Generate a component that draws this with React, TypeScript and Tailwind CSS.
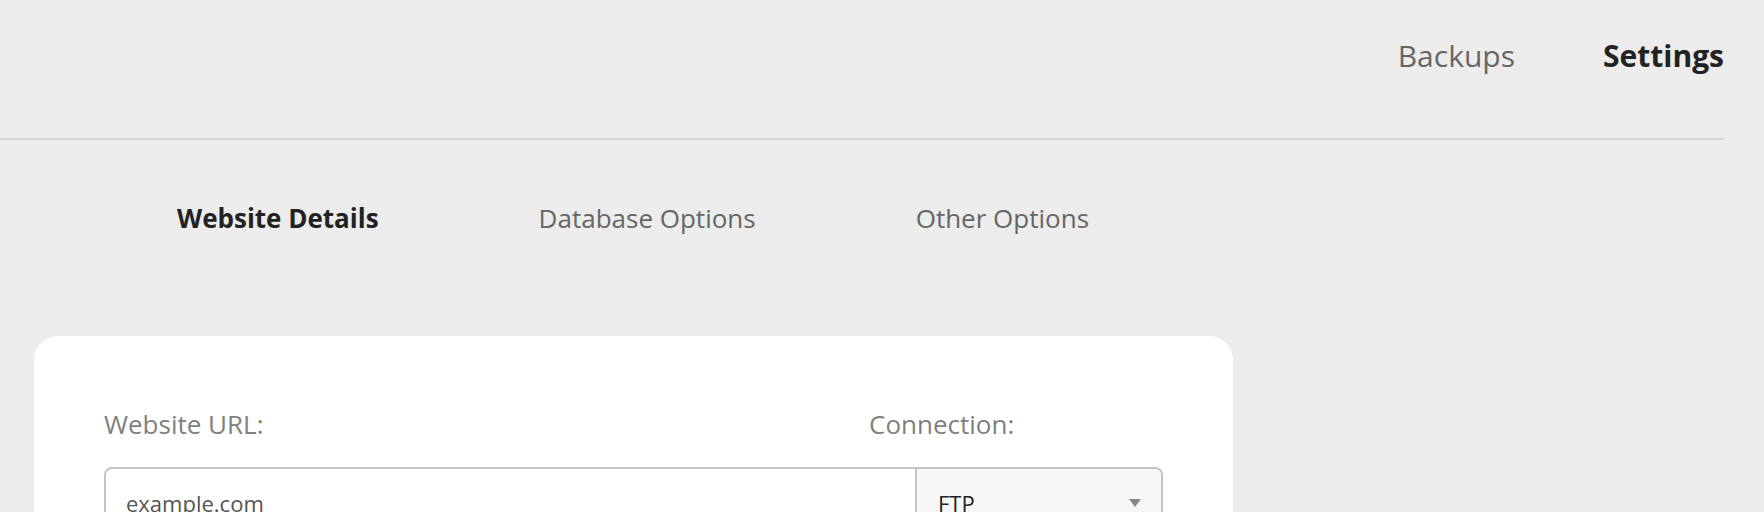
import { useState } from 'react';

const tabs = ['Website Details', 'Database Options', 'Other Options'];

export default function App() {
  const [tab, setTab] = useState('Website Details');
  const [url, setUrl] = useState('');

  return (
    <div className="min-h-screen bg-[#ececec] font-['Open_Sans',sans-serif] overflow-hidden">
      <div className="mr-[40px] h-[140px] border-b-2 border-[#d6d6d6] flex justify-end items-start pt-[38px] gap-[88px] text-[30px] leading-[36px]">
        <a className="text-[#666666]">Backups</a>
        <a className="text-[#222222] font-bold">Settings</a>
      </div>

      <div className="flex pl-[177px] gap-[160px] mt-[61px] text-[26px] leading-[34px]">
        {tabs.map(t => (
          <button key={t} onClick={() => setTab(t)} className={t === tab ? 'font-bold text-[#222222]' : 'text-[#666666]'}>
            {t}
          </button>
        ))}
      </div>

      <div className="ml-[34px] w-[1199px] mt-[101px] bg-white rounded-[24px] px-[70px] pt-[72px] pb-10">
        <div className="flex text-[26px] leading-[32px] text-[#808080]">
          <label className="w-[765px]">Website URL:</label>
          <label>Connection:</label>
        </div>
        <div className="mt-[27px] flex h-[72px] border-2 border-[#c4c4c4] rounded-[8px] overflow-hidden">
          <input
            value={url}
            onChange={e => setUrl(e.target.value)}
            placeholder="example.com"
            className="flex-1 px-[20px] text-[22px] text-[#333] placeholder:text-[#555] outline-none"
          />
          <div className="w-[246px] border-l-2 border-[#c4c4c4] bg-[#f7f7f7] flex items-center justify-between pl-[21px] pr-[20px] text-[22px] text-[#222]">
            <span>FTP</span>
            <svg width="12" height="8" viewBox="0 0 12 8"><path d="M0 0h12L6 8z" fill="#888" /></svg>
          </div>
        </div>
      </div>
    </div>
  );
}
